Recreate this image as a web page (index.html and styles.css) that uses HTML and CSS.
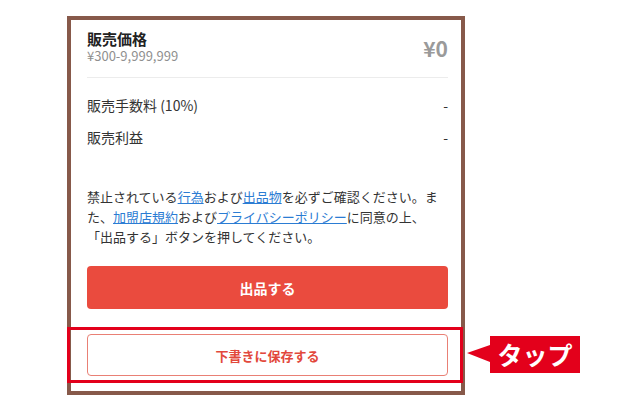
FILE: index.html
```html
<!DOCTYPE html>
<html lang="ja">
<head>
    <meta charset="UTF-8">
    <meta name="viewport" content="width=device-width, initial-scale=1.0">
    <title>出品確認</title>
    <link rel="stylesheet" href="styles.css">
</head>
<body>
    <div class="frame">
        <div class="price-head">
            <div>
                <div class="price-title">販売価格</div>
                <div class="price-range">¥300-9,999,999</div>
            </div>
            <div class="price-value">¥0</div>
        </div>

        <div class="fee-row">
            <span>販売手数料 (10%)</span>
            <span>-</span>
        </div>
        <div class="fee-row">
            <span>販売利益</span>
            <span>-</span>
        </div>

        <p class="notice">禁止されている<a href="#">行為</a>および<a href="#">出品物</a>を必ずご確認ください。また、<a href="#">加盟店規約</a>および<a href="#">プライバシーポリシー</a>に同意の上、<br>「出品する」ボタンを押してください。</p>

        <button class="btn-primary">出品する</button>
        <button class="btn-outline">下書きに保存する</button>

        <div class="highlight"></div>
    </div>

    <div class="callout">タップ</div>
</body>
</html>
```

FILE: styles.css
```css
body {
    margin: 0;
    background: #fff;
    font-family: "Noto Sans CJK JP", sans-serif;
    color: #333;
}

.frame {
    position: relative;
    box-sizing: border-box;
    width: 398px;
    height: 379px;
    margin: 16px 0 0 67px;
    border: 4px solid #87594a;
    padding: 9px 13px 0 16px;
}

.price-head {
    display: flex;
    justify-content: space-between;
    align-items: center;
    padding-bottom: 13px;
    border-bottom: 1px solid #ececec;
}
.price-title {
    font-size: 15px;
    font-weight: bold;
    line-height: 19px;
    color: #222;
}
.price-range {
    font-size: 13px;
    line-height: 16px;
    color: #8f8f8f;
}
.price-value {
    font-size: 21px;
    font-weight: bold;
    color: #9a9a9a;
    line-height: 24px;
    margin-top: 2px;
}

.fee-row {
    display: flex;
    justify-content: space-between;
    font-size: 14px;
    line-height: 20px;
    margin-top: 12px;
}
.price-head + .fee-row {
    margin-top: 17px;
}

.notice {
    margin: 40px 0 0;
    font-size: 13px;
    line-height: 20px;
    color: #333;
}
.notice a {
    color: #2b7cd3;
    text-decoration: underline;
}

.btn-primary,
.btn-outline {
    display: block;
    width: 100%;
    box-sizing: border-box;
    font-family: inherit;
    font-size: 14px;
    font-weight: bold;
    border-radius: 4px;
    cursor: pointer;
}
.btn-primary {
    margin-top: 19px;
    height: 43px;
    border: none;
    background: #ea4b3e;
    color: #fff;
}
.btn-outline {
    margin-top: 25px;
    height: 42px;
    border: 1px solid #e98075;
    background: #fff;
    color: #e2483c;
    font-size: 13px;
}

/* red box round the draft button */
.highlight {
    position: absolute;
    left: -4px;
    top: 307px;
    width: 396px;
    height: 56px;
    box-sizing: border-box;
    border: 3px solid #e3001b;
}

.callout {
    position: absolute;
    left: 490px;
    top: 336px;
    width: 90px;
    height: 37px;
    background: #e3001b;
    color: #fff;
    font-size: 25px;
    font-weight: bold;
    line-height: 37px;
    text-align: center;
}
.callout::before {
    content: '';
    position: absolute;
    left: -23px;
    top: 9px;
    border-style: solid;
    border-width: 8px 23px 9px 0;
    border-color: transparent #e3001b transparent transparent;
}
```
